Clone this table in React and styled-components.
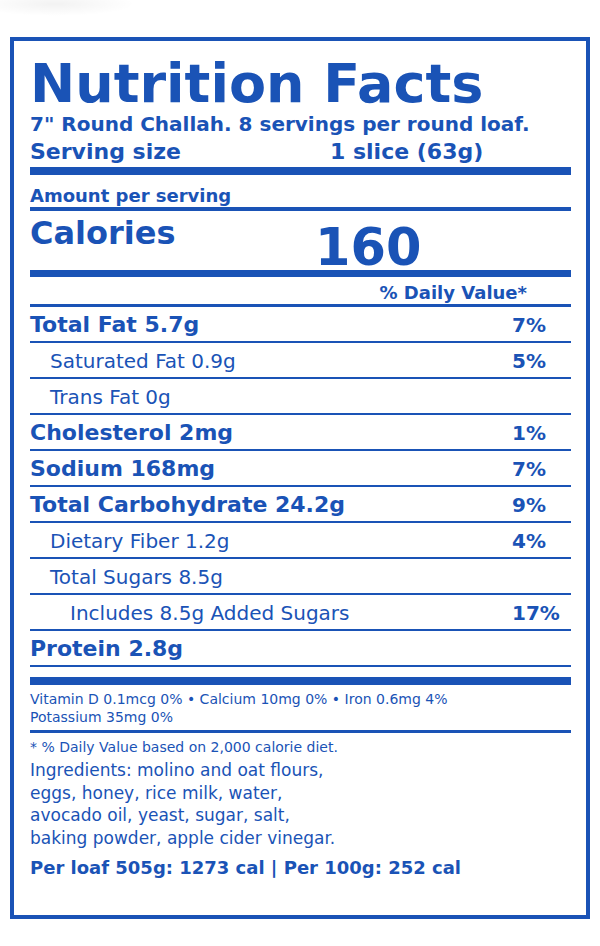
import React from 'react'
import styled, { createGlobalStyle } from 'styled-components'

const BLUE = '#1a53b6'

const GlobalStyle = createGlobalStyle`
  html, body {
    margin: 0;
    padding: 0;
    background: #ffffff;
  }
  body {
    font-family: "DejaVu Sans", "Liberation Sans", sans-serif;
    color: ${BLUE};
    background: radial-gradient(ellipse 80px 12px at 55px 4px, rgba(0, 0, 0, 0.05), rgba(0, 0, 0, 0)) no-repeat, #ffffff;
  }
`

const Page = styled.div`
  padding: 37px 10px 27px 10px;
`

const Label = styled.div`
  box-sizing: border-box;
  width: 580px;
  border: 4px solid ${BLUE};
  padding: 15px 15px 36px 16px;
  display: flex;
  flex-direction: column;
`

const Title = styled.h1`
  margin: 0;
  font-size: 54px;
  line-height: 56px;
  font-weight: 700;
`

const Subtitle = styled.div`
  font-size: 20px;
  line-height: 24px;
  font-weight: 700;
`

const ServingRow = styled.div`
  display: grid;
  grid-template-columns: 300px 1fr;
  margin-top: 4px;
  font-size: 22px;
  line-height: 24px;
  font-weight: 700;
`

const Rule = styled.div`
  height: ${p => p.$size}px;
  margin-top: ${p => p.$gap || 0}px;
  background: ${BLUE};
`

const SmallHeading = styled.div`
  padding-top: 11px;
  margin-bottom: 1px;
  font-size: 18px;
  line-height: 20px;
  font-weight: 700;
`

const CaloriesRow = styled.div`
  display: grid;
  grid-template-columns: 285px 1fr;
  align-items: start;
  height: 59px;
`

const CaloriesLabel = styled.div`
  margin-top: 5px;
  font-size: 32px;
  line-height: 34px;
  font-weight: 700;
`

const CaloriesValue = styled.div`
  margin-top: 14px;
  font-size: 51px;
  line-height: 45px;
  font-weight: 700;
`

const DailyHeader = styled.div`
  padding-top: 6px;
  padding-right: 44px;
  margin-bottom: 1px;
  text-align: right;
  font-size: 18px;
  line-height: 20px;
  font-weight: 700;
`

const NutrientRow = styled.div`
  display: grid;
  grid-template-columns: 1fr 59px;
  align-items: baseline;
  box-sizing: border-box;
  height: 36px;
  padding-top: 6px;
  padding-left: ${p => p.$indent * 20}px;
  border-bottom: 2px solid ${BLUE};
  line-height: 24px;
`

const NutrientName = styled.span`
  font-size: ${p => (p.$bold ? 22 : 20)}px;
  font-weight: ${p => (p.$bold ? 700 : 400)};
`

const Percent = styled.span`
  font-size: 20px;
  font-weight: 700;
`

const Minerals = styled.div`
  padding-top: 5px;
  margin-bottom: 4px;
  font-size: 14px;
  line-height: 18px;
`

const Footnote = styled.div`
  padding-top: 5px;
  font-size: 14px;
  line-height: 18px;
`

const Ingredients = styled.div`
  margin-top: 3px;
  font-size: 17px;
  line-height: 22.5px;
`

const PerLoaf = styled.div`
  margin-top: 8px;
  font-size: 18px;
  line-height: 22px;
  font-weight: 700;
`

const nutrients = [
  { name: 'Total Fat 5.7g', dv: '7%', bold: true, indent: 0 },
  { name: 'Saturated Fat 0.9g', dv: '5%', indent: 1 },
  { name: 'Trans Fat 0g', dv: '', indent: 1 },
  { name: 'Cholesterol 2mg', dv: '1%', bold: true, indent: 0 },
  { name: 'Sodium 168mg', dv: '7%', bold: true, indent: 0 },
  { name: 'Total Carbohydrate 24.2g', dv: '9%', bold: true, indent: 0 },
  { name: 'Dietary Fiber 1.2g', dv: '4%', indent: 1 },
  { name: 'Total Sugars 8.5g', dv: '', indent: 1 },
  { name: 'Includes 8.5g Added Sugars', dv: '17%', indent: 2 },
  { name: 'Protein 2.8g', dv: '', bold: true, indent: 0 },
]

export default function App() {
  return (
    <>
      <GlobalStyle />
      <Page>
        <Label>
          <Title>Nutrition Facts</Title>
          <Subtitle>7" Round Challah. 8 servings per round loaf.</Subtitle>
          <ServingRow>
            <span>Serving size</span>
            <span>1 slice (63g)</span>
          </ServingRow>
          <Rule $size={8} $gap={3} />

          <SmallHeading>Amount per serving</SmallHeading>
          <Rule $size={4} />
          <CaloriesRow>
            <CaloriesLabel>Calories</CaloriesLabel>
            <CaloriesValue>160</CaloriesValue>
          </CaloriesRow>
          <Rule $size={7} />

          <DailyHeader>% Daily Value*</DailyHeader>
          <Rule $size={3} />

          {nutrients.map(n => (
            <NutrientRow key={n.name} $indent={n.indent}>
              <NutrientName $bold={n.bold}>{n.name}</NutrientName>
              <Percent>{n.dv}</Percent>
            </NutrientRow>
          ))}

          <Rule $size={8} $gap={10} />
          <Minerals>
            Vitamin D 0.1mcg 0% • Calcium 10mg 0% • Iron 0.6mg 4%
            <br />
            Potassium 35mg 0%
          </Minerals>
          <Rule $size={3} />

          <Footnote>* % Daily Value based on 2,000 calorie diet.</Footnote>
          <Ingredients>
            Ingredients: molino and oat flours,
            <br />
            eggs, honey, rice milk, water,
            <br />
            avocado oil, yeast, sugar, salt,
            <br />
            baking powder, apple cider vinegar.
          </Ingredients>
          <PerLoaf>Per loaf 505g: 1273 cal | Per 100g: 252 cal</PerLoaf>
        </Label>
      </Page>
    </>
  )
}
